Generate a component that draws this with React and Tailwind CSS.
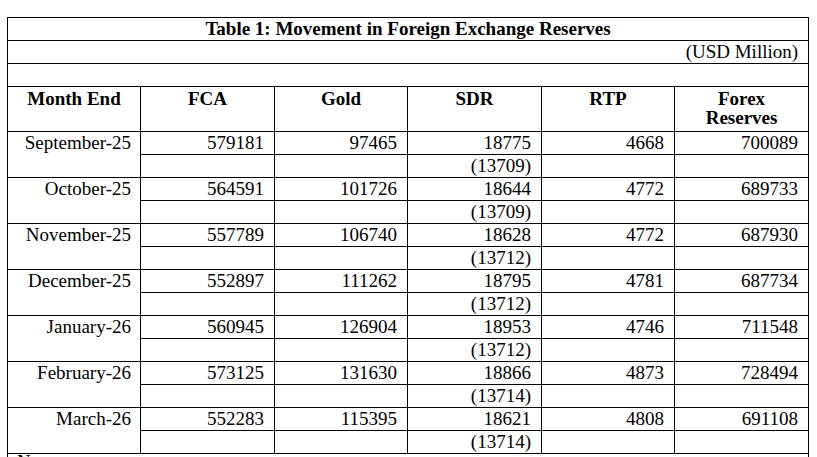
import React from "react";

const rows = [
  ["September-25", "579181", "97465", "18775", "(13709)", "4668", "700089"],
  ["October-25", "564591", "101726", "18644", "(13709)", "4772", "689733"],
  ["November-25", "557789", "106740", "18628", "(13712)", "4772", "687930"],
  ["December-25", "552897", "111262", "18795", "(13712)", "4781", "687734"],
  ["January-26", "560945", "126904", "18953", "(13712)", "4746", "711548"],
  ["February-26", "573125", "131630", "18866", "(13714)", "4873", "728494"],
  ["March-26", "552283", "115395", "18621", "(13714)", "4808", "691108"],
];

const cell = "border border-black p-0 leading-[22px] align-middle";
const num = cell + " text-right pr-[10px]";

export default function App() {
  return (
    <div className="bg-white w-[817px] h-[457px] overflow-hidden font-['Liberation_Serif',serif] text-[19px] text-black">
      <table className="ml-[7px] mt-[17px] w-[801px] table-fixed border-collapse">
        <colgroup>
          <col className="w-[133px]" />
          <col className="w-[134px]" />
          <col className="w-[133px]" />
          <col className="w-[134px]" />
          <col className="w-[133px]" />
          <col className="w-[134px]" />
        </colgroup>
        <tbody>
          <tr className="h-[23px]">
            <td colSpan={6} className={cell + " text-center font-bold"}>
              Table 1: Movement in Foreign Exchange Reserves
            </td>
          </tr>
          <tr className="h-[23px]">
            <td colSpan={6} className={cell + " text-right pr-[10px]"}>
              (USD Million)
            </td>
          </tr>
          <tr className="h-[23px]">
            <td colSpan={6} className={cell}></td>
          </tr>
          <tr className="h-[45px]">
            {["Month End", "FCA", "Gold", "SDR", "RTP"].map((h) => (
              <td key={h} className="border border-black p-0 pt-[2px] align-top text-center font-bold leading-[19px]">
                {h}
              </td>
            ))}
            <td className="border border-black p-0 pt-[2px] align-top text-center font-bold leading-[19px]">
              Forex
              <br />
              Reserves
            </td>
          </tr>
          {rows.map((r) => (
            <React.Fragment key={r[0]}>
              <tr className="h-[23px]">
                <td rowSpan={2} className="border border-black p-0 pr-[9px] align-top text-right leading-[22px]">
                  {r[0]}
                </td>
                <td className={num}>{r[1]}</td>
                <td className={num}>{r[2]}</td>
                <td className={num}>{r[3]}</td>
                <td className={num}>{r[5]}</td>
                <td className={num}>{r[6]}</td>
              </tr>
              <tr className="h-[23px]">
                <td className={num}></td>
                <td className={num}></td>
                <td className={num}>{r[4]}</td>
                <td className={num}></td>
                <td className={num}></td>
              </tr>
            </React.Fragment>
          ))}
          <tr className="h-[23px]">
            <td colSpan={6} className="border border-black p-0 pl-[9px] align-top leading-[15px]">
              Note:
            </td>
          </tr>
        </tbody>
      </table>
    </div>
  );
}
